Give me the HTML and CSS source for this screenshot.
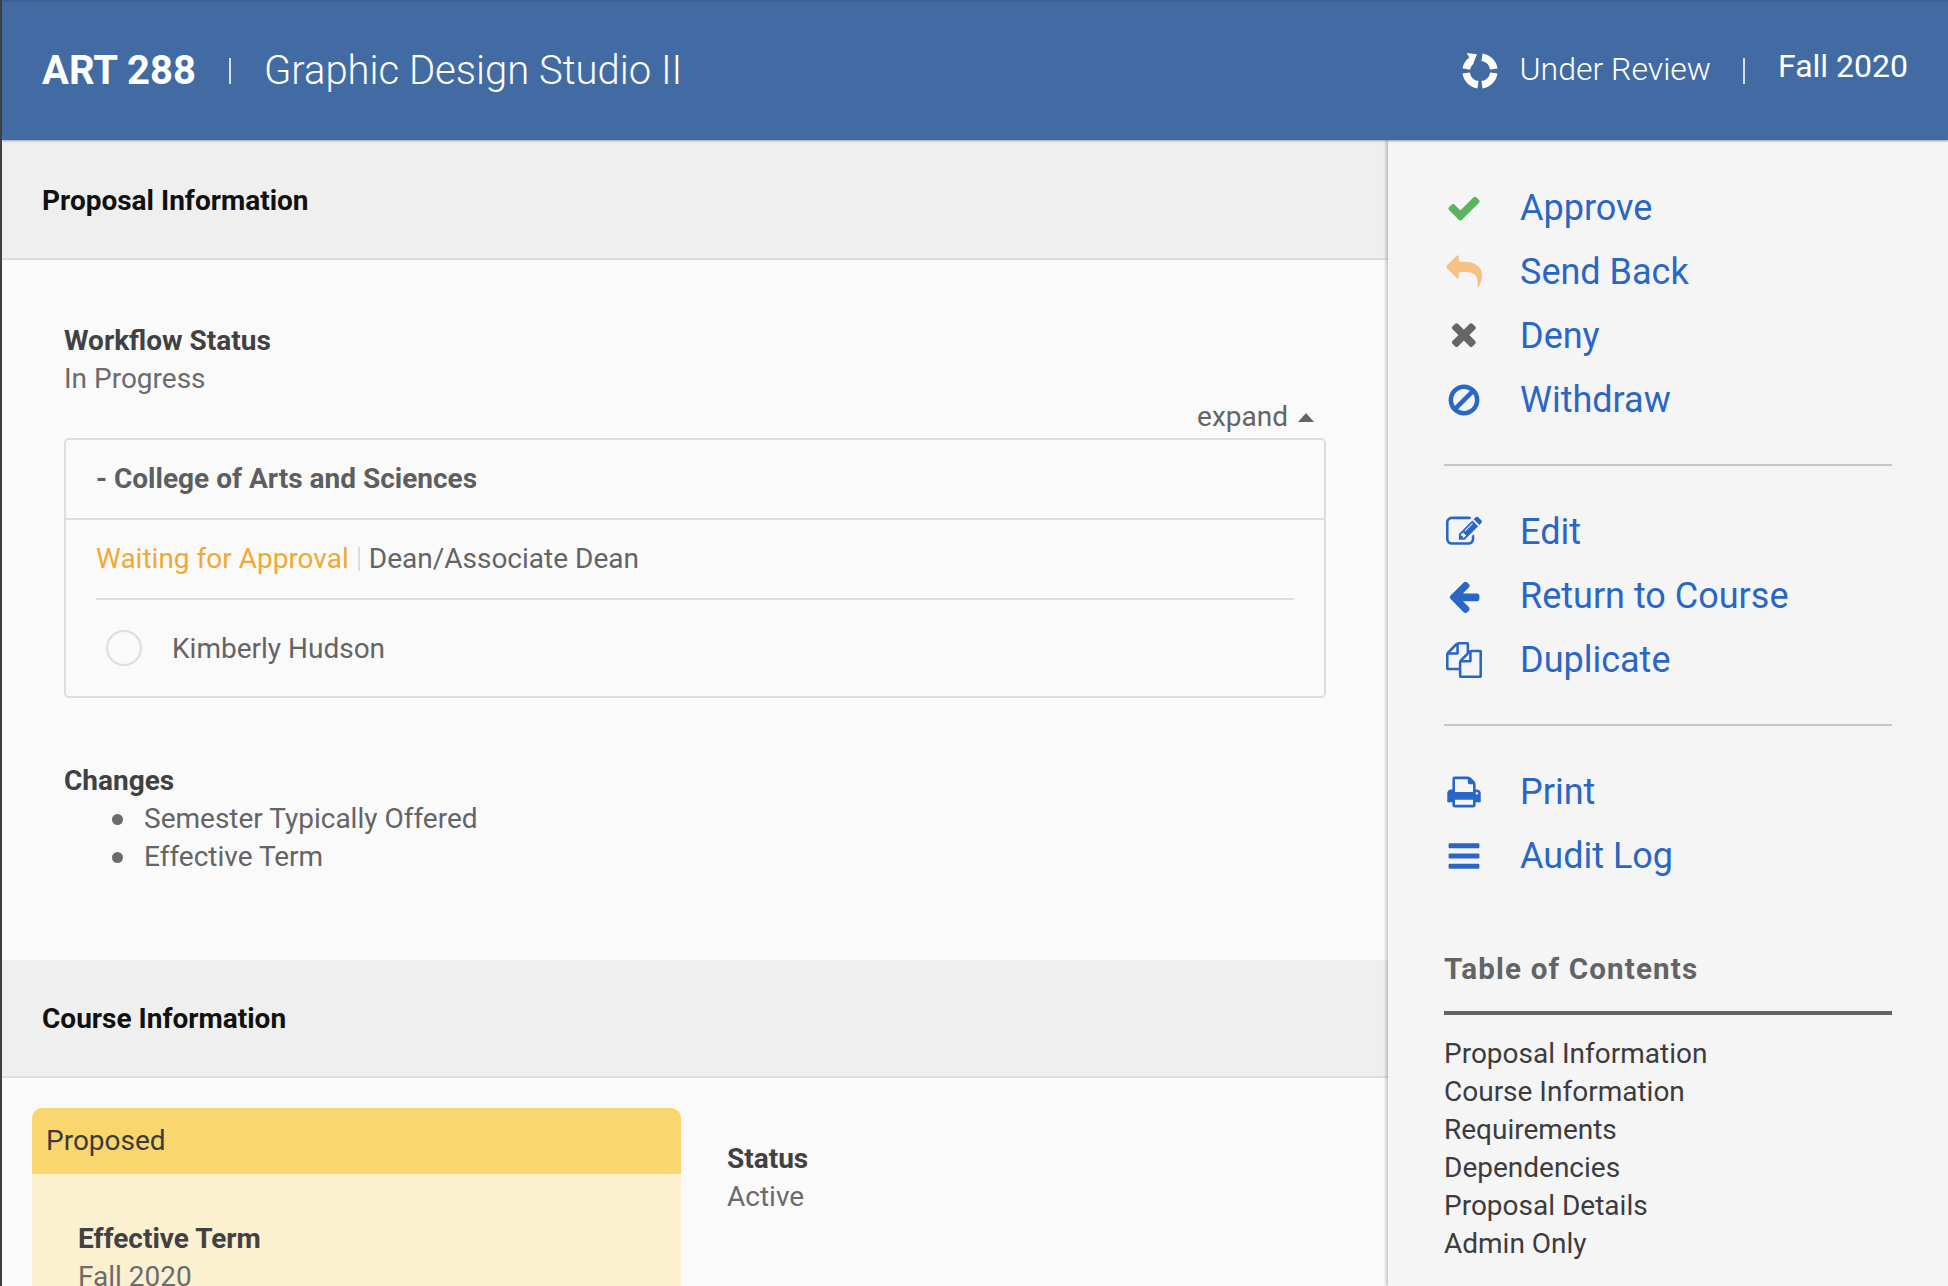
FILE: index.html
```html
<!DOCTYPE html>
<html lang="en">
<head>
<meta charset="utf-8">
<title>ART 288 Graphic Design Studio II</title>
<link rel="stylesheet" href="styles.css">
</head>
<body>
<div class="page">
  <header class="topbar">
    <div class="course">
      <span class="course-code">ART 288</span>
      <span class="bar"></span>
      <span class="course-name">Graphic Design Studio II</span>
    </div>
    <div class="status">
      <svg class="review-icon" viewBox="0 0 36 36"><g fill="none" stroke="#fff" stroke-width="7.5"><path d="M20 4.2A14 14 0 0 1 31.8 16"/><path d="M31.8 20A14 14 0 0 1 20 31.8"/><path d="M16 31.8A14 14 0 0 1 4.2 20"/><path d="M4.2 16A14 14 0 0 1 9.5 7.5"/></g><path fill="#fff" d="M4.7 0L15 1.3L11 11Z"/></svg>
      <span class="review-text">Under Review</span>
      <span class="bar"></span>
      <span class="term">Fall 2020</span>
    </div>
  </header>
  <div class="columns">
    <main class="main">
      <h2 class="band">Proposal Information</h2>
      <section class="proposal">
        <div class="label">Workflow Status</div>
        <div class="value">In Progress</div>
        <div class="expand">expand <span class="caret"></span></div>
        <div class="wf-box">
          <div class="wf-head">- College of Arts and Sciences</div>
          <div class="wf-body">
            <div class="wf-step"><span class="waiting">Waiting for Approval</span><span class="pipe"></span><span>Dean/Associate Dean</span></div>
            <div class="wf-person"><span class="circle"></span><span>Kimberly Hudson</span></div>
          </div>
        </div>
        <div class="label changes">Changes</div>
        <ul class="change-list">
          <li>Semester Typically Offered</li>
          <li>Effective Term</li>
        </ul>
      </section>
      <h2 class="band">Course Information</h2>
      <section class="course-info">
        <div class="card">
          <div class="card-head">Proposed</div>
          <div class="card-body">
            <div class="label">Effective Term</div>
            <div class="value">Fall 2020</div>
          </div>
        </div>
        <div class="side-field">
          <div class="label">Status</div>
          <div class="value">Active</div>
        </div>
      </section>
    </main>
    <aside class="sidebar">
      <ul class="actions">
        <li><svg class="ico green" viewBox="0 0 1792 1792"><path d="M1671 566q0 40-28 68l-724 724-136 136q-28 28-68 28t-68-28l-136-136-362-362q-28-28-28-68t28-68l136-136q28-28 68-28t68 28l294 295 656-657q28-28 68-28t68 28l136 136q28 28 28 68z"/></svg><a>Approve</a></li>
        <li><svg class="ico orange" viewBox="0 0 1792 1792"><path d="M1792 1120q0 166-127 451-3 7-10.5 24t-13.5 30-13 22q-12 17-28 17-15 0-23.5-10t-8.5-25q0-9 2.5-26.5t2.5-23.5q5-68 5-123 0-101-17.5-181t-48.5-138.5-80-101-105.5-69.5-133-42.5-154-21.5-175.5-6h-224v256q0 26-19 45t-45 19-45-19l-512-512q-19-19-19-45t19-45l512-512q19-19 45-19t45 19 19 45v256h224q713 0 875 403 53 134 53 333z"/></svg><a>Send Back</a></li>
        <li><svg class="ico grey" viewBox="-184 0 1792 1792"><path d="M1298 1214q0 40-28 68l-136 136q-28 28-68 28t-68-28l-294-294-294 294q-28 28-68 28t-68-28l-136-136q-28-28-28-68t28-68l294-294-294-294q-28-28-28-68t28-68l136-136q28-28 68-28t68 28l294 294 294-294q28-28 68-28t68 28l136 136q28 28 28 68t-28 68l-294 294 294 294q28 28 28 68z"/></svg><a>Deny</a></li>
        <li><svg class="ico" viewBox="0 0 1792 1792"><path d="M1440 893q0-161-87-295l-754 753q137 89 297 89 111 0 211.5-43.5t173.5-116.5 116-174.5 43-212.5zm-999 299l755-754q-135-91-300-91-148 0-273 73t-198 199-73 274q0 162 89 299zm1223-299q0 157-61 300t-163.5 246-245 164-298.5 61-298.5-61-245-164-163.5-246-61-300 61-299.5 163.5-245.5 245-164 298.5-61 298.5 61 245 164 163.5 245.5 61 299.5z"/></svg><a>Withdraw</a></li>
      </ul>
      <ul class="actions">
        <li><svg class="ico" viewBox="0 0 1792 1792"><path d="M888 1184l116-116-152-152-116 116v56h96v96h56zm440-720q-16-16-33 1l-350 350q-17 17-1 33t33-1l350-350q17-17 1-33zm80 594v190q0 119-84.5 203.5t-203.5 84.5h-832q-119 0-203.5-84.5t-84.5-203.5v-832q0-119 84.5-203.5t203.5-84.5h832q63 0 117 25 15 7 18 23 3 17-9 29l-49 49q-14 14-32 8-23-6-45-6h-832q-66 0-113 47t-47 113v832q0 66 47 113t113 47h832q66 0 113-47t47-113v-126q0-13 9-22l64-64q15-15 35-7t20 29zm-96-738l288 288-672 672h-288v-288zm444 132l-92 92-288-288 92-92q28-28 68-28t68 28l152 152q28 28 28 68t-28 68z"/></svg><a>Edit</a></li>
        <li><svg class="ico" viewBox="0 0 1792 1792"><path d="M1664 896v128q0 53-32.5 90.5t-84.5 37.5h-704l293 294q38 36 38 90t-38 90l-75 76q-37 37-90 37-52 0-91-37l-651-652q-37-37-37-90 0-52 37-91l651-650q38-38 91-38 52 0 90 38l75 74q38 38 38 91t-38 91l-293 293h704q52 0 84.5 37.5t32.5 90.5z"/></svg><a>Return to Course</a></li>
        <li><svg class="ico" viewBox="0 0 1792 1792"><path d="M1696 384q40 0 68 28t28 68v1216q0 40-28 68t-68 28h-960q-40 0-68-28t-28-68v-288h-544q-40 0-68-28t-28-68v-672q0-40 20-88t48-76l408-408q28-28 76-48t88-20h416q40 0 68 28t28 68v328q68-40 128-40h416zm-544 213l-299 299h299v-299zm-640-384l-299 299h299v-299zm196 647l316-316v-416h-384v416q0 40-28 68t-68 28h-416v640h512v-256q0-40 20-88t48-76zm956 804v-1152h-384v416q0 40-28 68t-68 28h-416v640h896z"/></svg><a>Duplicate</a></li>
      </ul>
      <ul class="actions last">
        <li><svg class="ico" viewBox="0 0 1792 1792"><path d="M448 1536h896v-256h-896v256zm0-640h896v-384h-160q-40 0-68-28t-28-68v-160h-640v640zm1152 64q0-26-19-45t-45-19-45 19-19 45 19 45 45 19 45-19 19-45zm128 0v416q0 13-9.5 22.5t-22.5 9.5h-224v160q0 40-28 68t-68 28h-960q-40 0-68-28t-28-68v-160h-224q-13 0-22.5-9.5t-9.5-22.5v-416q0-79 56.5-135.5t135.5-56.5h64v-544q0-40 28-68t68-28h672q40 0 88 20t76 48l152 152q28 28 48 76t20 88v256h64q79 0 135.5 56.5t56.5 135.5z"/></svg><a>Print</a></li>
        <li><svg class="ico" viewBox="0 0 1792 1792"><path d="M1664 1344v128q0 26-19 45t-45 19h-1408q-26 0-45-19t-19-45v-128q0-26 19-45t45-19h1408q26 0 45 19t19 45zm0-512v128q0 26-19 45t-45 19h-1408q-26 0-45-19t-19-45v-128q0-26 19-45t45-19h1408q26 0 45 19t19 45zm0-512v128q0 26-19 45t-45 19h-1408q-26 0-45-19t-19-45v-128q0-26 19-45t45-19h1408q26 0 45 19t19 45z"/></svg><a>Audit Log</a></li>
      </ul>
      <h3 class="toc-title">Table of Contents</h3>
      <ul class="toc">
        <li>Proposal Information</li>
        <li>Course Information</li>
        <li>Requirements</li>
        <li>Dependencies</li>
        <li>Proposal Details</li>
        <li>Admin Only</li>
      </ul>
    </aside>
  </div>
</div>
</body>
</html>
```

FILE: styles.css
```css
* { box-sizing: border-box; }
html, body { margin: 0; height: 100%; overflow: hidden; }
body { background: #3f3f41; font-family: Roboto, "Liberation Sans", sans-serif; font-size: 28px; line-height: 38px; color: #636466; }
.page { margin-left: 2px; height: 1286px; display: flex; flex-direction: column; overflow: hidden; background: #fafafa; }

.topbar { height: 140px; flex: none; background: #436ba3; border-top: 2px solid #3d5f92; color: #fff; display: flex; justify-content: space-between; position: relative; z-index: 2; box-shadow: 0 1px 2px rgba(40,60,90,.5); }
.course { display: flex; align-items: center; padding-left: 40px; }
.course-code { font-size: 40px; font-weight: 700; line-height: 44px; }
.course-name { font-size: 40px; font-weight: 300; line-height: 44px; }
.bar { width: 2px; height: 26px; background: #d5deea; margin: 0 33px; }
.status { display: flex; align-items: center; padding-right: 40px; }
.status .bar { margin-left: 32px; }
.review-icon { width: 36px; height: 36px; margin-right: 22px; }
.review-text { font-size: 32px; font-weight: 300; padding-bottom: 4px; }
.term { font-size: 32px; font-weight: 400; padding-bottom: 10px; }

.columns { flex: 1; display: flex; min-height: 0; }
.main { flex: none; width: 1386px; padding-top: 2px; }
.band { margin: 0; height: 118px; background: #efefef; border-bottom: 2px solid #ddd; padding: 2px 40px 0; font-size: 28px; font-weight: 700; color: #111; display: flex; align-items: center; }

.proposal { padding: 62px 62px 0 62px; height: 700px; }
.label { font-weight: 700; color: #414143; }
.value { color: #6a6b6d; }
.expand { text-align: right; padding-right: 12px; height: 38px; color: #636466; }
.caret { display: inline-block; width: 0; height: 0; border: 8px solid transparent; border-bottom: 9px solid #636466; border-top: 0; vertical-align: 4px; margin-left: 3px; }
.wf-box { margin-top: 2px; border: 2px solid #ddd; border-radius: 5px; height: 260px; }
.wf-head { height: 80px; border-bottom: 2px solid #ddd; padding: 0 30px; font-weight: 700; color: #5d5e60; display: flex; align-items: center; }
.wf-body { padding: 0 30px; }
.wf-step { height: 80px; border-bottom: 2px solid #ddd; display: flex; align-items: center; color: #636466; }
.waiting { color: #f5a733; }
.pipe { width: 2px; height: 24px; background: #ddd; margin: 0 9px; }
.wf-person { display: flex; align-items: center; margin-top: 30px; color: #636466; }
.circle { width: 36px; height: 36px; border: 2px solid #ddd; border-radius: 50%; margin: 0 30px 2px 10px; }
.changes { margin-top: 64px; }
.change-list { list-style: none; margin: 0; padding: 0 0 0 48px; }
.change-list li { display: flex; align-items: center; }
.change-list li::before { content: ""; width: 11px; height: 11px; border-radius: 50%; background: #6a6b6d; margin-right: 21px; }

.course-info { display: flex; padding: 30px 0 0 30px; }
.card { width: 649px; border-radius: 10px 10px 0 0; overflow: hidden; flex: none; background: #fbf0d0; height: 400px; }
.card-head { height: 66px; background: #fad66f; padding: 14px 14px; color: #3b3b3d; }
.card-body { padding: 46px 46px; }
.side-field { margin: 32px 0 0 46px; }

.sidebar { flex: 1; background: #f5f5f5; box-shadow: -2px 0 3px rgba(0,0,0,.22); padding: 36px 56px 0 56px; position: relative; }
.actions { list-style: none; margin: 0 0 34px; padding: 0 0 32px; border-bottom: 2px solid #c4c4c4; }
.actions.last { border-bottom: 0; padding-bottom: 0; margin-bottom: 62px; }
.actions li { height: 64px; display: flex; align-items: center; font-size: 36px; }
.actions a { color: #2a66c5; }
.ico { width: 36px; height: 36px; flex: none; margin: 0 38px 0 2px; fill: #2a66c5; }
.green { fill: #5cb25d; }
.orange { fill: #f5c283; }
.grey { fill: #666; }
.toc-title { margin: 0; padding-bottom: 23px; border-bottom: 4px solid #636466; font-size: 29.6px; font-weight: 700; letter-spacing: 1.14px; color: #636466; }
.toc { list-style: none; margin: 20px 0 0; padding: 0; color: #3c3c3e; }
```
